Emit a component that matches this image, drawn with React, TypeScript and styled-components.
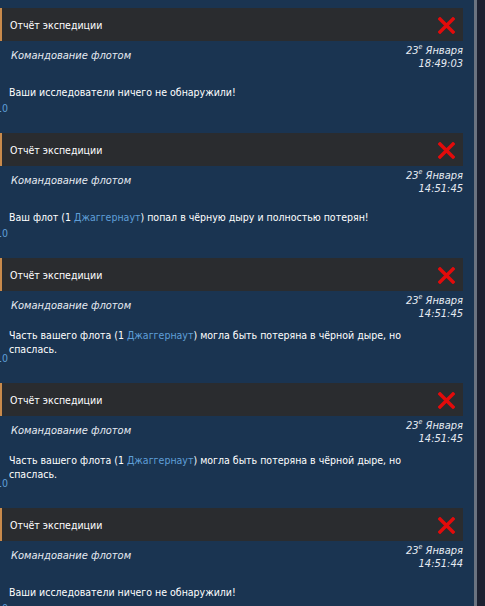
import styled, { createGlobalStyle } from 'styled-components';

const Global = createGlobalStyle`
  html, body {
    margin: 0;
    padding: 0;
    background: #1d2131;
    overflow: hidden;
  }
`;

const Page = styled.div`
  display: flex;
  height: 606px;
  font-family: 'DejaVu Sans Condensed', 'DejaVu Sans', sans-serif;
  font-size: 10.5px;
  color: #f2f4f6;
`;

const List = styled.div`
  width: 474px;
  background: #1a3451;
  overflow: hidden;
`;

const Track = styled.div`
  flex: 1;
  border-left: 3px solid #6b7380;
  background: #1d2131;
`;

const Message = styled.div`
  position: relative;
  height: 125px;
  padding: 8px 11px 0 0;
  box-sizing: border-box;
  display: flex;
  flex-direction: column;
`;

const Header = styled.div`
  height: 33px;
  flex: none;
  display: flex;
  align-items: center;
  justify-content: space-between;
  background: #2a2c2f;
  border-left: 2px solid #c98a4b;
  padding: 0 8px 0 8px;
  box-sizing: border-box;
`;

const Subject = styled.span`
  color: #ffffff;
`;

const Close = styled.svg`
  width: 17px;
  height: 17px;
  display: block;
  margin-top: 1px;
`;

const Meta = styled.div`
  height: 29px;
  flex: none;
  display: flex;
  align-items: center;
  justify-content: space-between;
  font-style: italic;
  color: #e6ebf2;
`;

const Sender = styled.span`
  padding-left: 11px;
  font-size: 11px;
`;

const DateBox = styled.div`
  text-align: right;
  line-height: 14px;
  font-size: 11px;
`;

const Sup = styled.sup`
  font-size: 7px;
`;

const Body = styled.div`
  height: 43px;
  display: flex;
  align-items: center;
  padding: 0 50px 0 9px;
  line-height: 14px;
  color: #ffffff;
`;

const Ship = styled.span`
  color: #5f9fd8;
`;

const Counter = styled.span`
  position: absolute;
  left: -4px;
  top: 101px;
  line-height: 14px;
  color: #5f9fd8;
`;

type Item = {
  time: string;
  text: React.ReactNode;
};

const ship = <Ship>Джаггернаут</Ship>;

const items: Item[] = [
  { time: '18:49:03', text: <>Ваши исследователи ничего не обнаружили!</> },
  {
    time: '14:51:45',
    text: <>Ваш флот (1 {ship}) попал в чёрную дыру и полностью потерян!</>,
  },
  {
    time: '14:51:45',
    text: (
      <>
        Часть вашего флота (1 {ship}) могла быть потеряна в чёрной дыре, но
        спаслась.
      </>
    ),
  },
  {
    time: '14:51:45',
    text: (
      <>
        Часть вашего флота (1 {ship}) могла быть потеряна в чёрной дыре, но
        спаслась.
      </>
    ),
  },
  { time: '14:51:44', text: <>Ваши исследователи ничего не обнаружили!</> },
];

const CloseIcon = () => (
  <Close viewBox="0 0 17 17">
    <path
      d="M2 2 L15 15 M15 2 L2 15"
      stroke="#e30b0b"
      strokeWidth="3.4"
      strokeLinecap="square"
    />
  </Close>
);

export default function App() {
  return (
    <>
      <Global />
      <Page>
        <List>
          {items.map((m, i) => (
            <Message key={i}>
              <Header>
                <Subject>Отчёт экспедиции</Subject>
                <CloseIcon />
              </Header>
              <Meta>
                <Sender>Командование флотом</Sender>
                <DateBox>
                  23<Sup>е</Sup> Января
                  <br />
                  {m.time}
                </DateBox>
              </Meta>
              <Body>
                <div>{m.text}</div>
              </Body>
              <Counter>10</Counter>
            </Message>
          ))}
        </List>
        <Track />
      </Page>
    </>
  );
}
